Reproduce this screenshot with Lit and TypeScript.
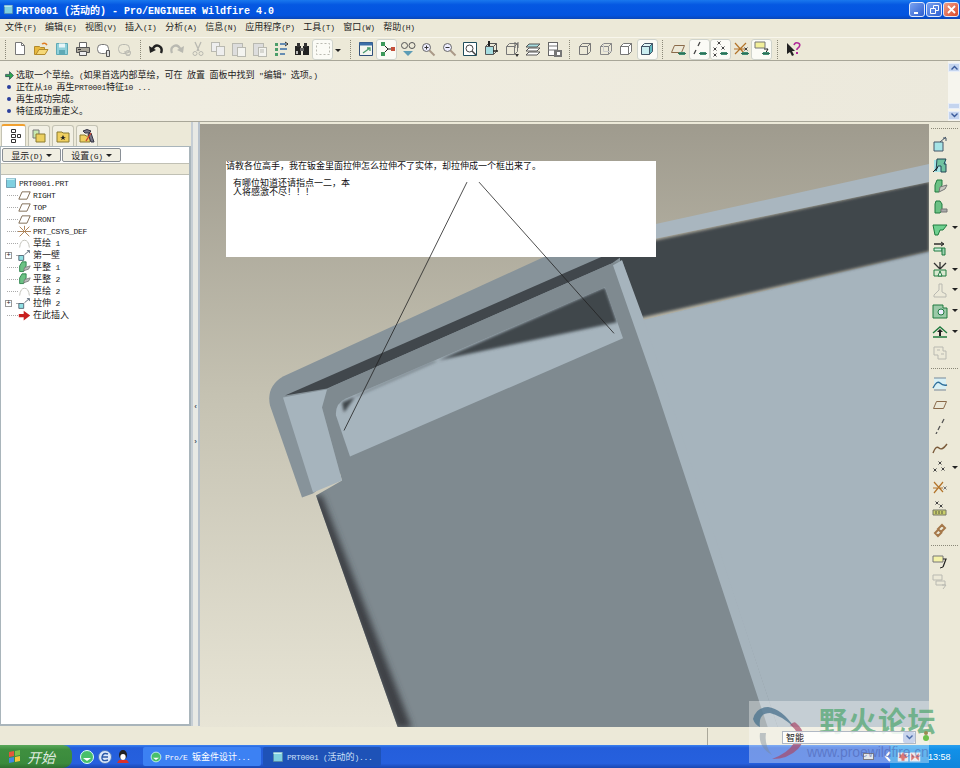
import { LitElement, html, css, svg } from "lit";
import { customElement } from "lit/decorators.js";

// ascii runs get a narrower mono font, like the bitmap font in the shot
const mix = (s: string) =>
  s.split(/([\x20-\x7e]+)/).map((p, i) => (i % 2 ? html`<span class="a">${p}</span>` : p));

const GR = "#1f7a3f";
const GL = "#6cc184";
const BR = "#8a6a4a";
const OFF = "#b9b9b1";

const doc = (x: number, y: number, w: number, h: number, f = "#fff", s = "#777") =>
  svg`<rect x=${x + 0.5} y=${y + 0.5} width=${w} height=${h} fill=${f} stroke=${s} />`;
const ln = (d: string, s = "#555", w = 1) => svg`<path d=${d} fill="none" stroke=${s} stroke-width=${w} />`;
const fl = (d: string, f: string, s = "none") => svg`<path d=${d} fill=${f} stroke=${s} />`;
const cross = (x: number, y: number, s = "#444") => ln(`M${x - 1.5} ${y - 1.5}l3 3m0 -3l-3 3`, s);
const cube = (s = "#888", f = "none") =>
  svg`${fl("M2.5 5.5h8v8h-8z", f, s)}${ln("M2.5 5.5l3-3h8v8l-3 3M10.5 5.5l3-3", s)}`;
const bug = svg`${fl("M9 11h6v3h-6z", "#3f8f73")}${ln("M8 12.5h8", "#2d6f58")}`;
const plane = (s = BR) => fl("M4.5 4.5h10l-3 7h-10z", "none", s);
const mag = (f: string) =>
  svg`<circle cx="6.5" cy="6.5" r="4" fill="#eef" stroke="#666" />${ln("M9.5 9.5l5 5", "#a98", 2)}${ln(f, "#333")}`;

const icons: Record<string, unknown> = {
  new: svg`${fl("M3.5 1.5h6l3 3v9h-9z", "#fff", "#777")}${ln("M9.5 1.5v3h3", "#777")}`,
  open: svg`${fl("M1.5 5.5h5l1 1h4v7h-10z", "#e8b93f", "#b28a2c")}${fl("M3 13.5l3-5h9l-3 5z", "#f5d878", "#b28a2c")}${ln("M9 3q3-2 5 1", "#e07b20", 1.5)}`,
  save: svg`${fl("M2.5 2.5h11v11h-11z", "#8fd0da", "#5fa9b5")}${fl("M5 2.5h6v4H5z", "#e8f6f8")}${fl("M5 9h6v4.5H5z", "#5fa9b5")}`,
  print: svg`${fl("M4.5 1.5h7v5h-7z", "#fff", "#666")}${fl("M1.5 6.5h13v5h-13z", "#aaa69a", "#555")}${fl("M4.5 10.5h7v4h-7z", "#eee", "#555")}${ln("M3 8.5h3", "#333")}`,
  preview: svg`<rect x="1.5" y="3.5" width="11" height="9" rx="4" fill="#fff" stroke="#777" />${fl("M10.5 9.5h3v6h-3z", "#ddd", "#555")}`,
  preview2: svg`<rect x="1.5" y="3.5" width="11" height="9" rx="4" fill="none" stroke=${OFF} />${ln("M7 11h7M9 14h4", OFF)}<circle cx="11" cy="12" r="2.5" fill="none" stroke=${OFF} />`,
  undo: svg`${ln("M4 9Q7 3 11 5T13 12", "#222", 2.4)}${fl("M1 5l1 7 6-3z", "#222")}`,
  redo: svg`${ln("M12 9Q9 3 5 5T3 12", OFF, 2.2)}${fl("M15 5l-1 7-6-3z", OFF)}`,
  cut: svg`${ln("M5 1l4 9M11 1l-4 9", OFF, 1.3)}<circle cx="5" cy="12.5" r="2" fill="none" stroke=${OFF} /><circle cx="11" cy="12.5" r="2" fill="none" stroke=${OFF} />`,
  copy: svg`${doc(1, 1, 8, 9, "#eee", OFF)}${doc(6, 5, 8, 9, "#eee", OFF)}`,
  paste: svg`${doc(1, 2, 10, 12, "#ddd", OFF)}${doc(6, 6, 8, 9, "#f4f4f0", OFF)}`,
  paste2: svg`${doc(1, 2, 10, 12, "#ddd", OFF)}${doc(6, 6, 8, 9, "#f4f4f0", OFF)}${ln("M8 9h4M8 11h4", OFF)}`,
  regen: svg`${fl("M2 2h3v3H2z", "#4c9e6a")}${fl("M2 7h3v3H2z", "#4c9e6a")}${fl("M2 12h3v3H2z", "#4c9e6a")}${ln("M7 3h6M7 8h7M7 13h5", "#3a6ea5", 1.4)}${ln("M12 1l3 2-3 2", "#222")}`,
  find: svg`${fl("M1 5h6v9H1zM9 5h6v9H9z", "#222")}${fl("M3 2h3v4H3zM10 2h3v4h-3z", "#333")}${fl("M6 7h4v3H6z", "#666")}${fl("M2 10h2v3H2z", "#bbb")}`,
  boxsel: svg`<rect x="1.5" y="2.5" width="13" height="11" fill="none" stroke=${OFF} stroke-dasharray="2 2" />`,
  view: svg`${fl("M1.5 1.5h13v13h-13z", "#f4f6f0", "#2f4f7a")}${fl("M1.5 1.5h13v3h-13z", "#3b6ea8")}${ln("M5 12l7-5M9 7h3v3", "#4a9a6c", 1.3)}`,
  net: svg`${ln("M4 3L9 8L4 13M9 8h5", "#222")}${fl("M2 1h4v4H2zM2 11h4v4H2z", "#3d9a5c")}${fl("M12 6h4v4h-4z", "#c5503b")}`,
  spin: svg`<circle cx="4.5" cy="4.5" r="3" fill="none" stroke="#555" /><circle cx="12" cy="4.5" r="3" fill="none" stroke="#555" />${fl("M3 10l5 5 5-5z", "#5c9cb5")}`,
  zin: mag("M4.5 6.5h4M6.5 4.5v4"),
  zout: mag("M4.5 6.5h4"),
  fit: svg`${fl("M1.5 1.5h13v13h-13z", "#fff", "#1f4d5c")}<circle cx="7.5" cy="7.5" r="3.5" fill="none" stroke="#444" />${ln("M10 10l4 4", "#444", 1.4)}`,
  reori: svg`${cube("#555", "#a6dde0")}${fl("M5 0h2v5H5z", "#222")}${ln("M10 10h5", "#222", 1.5)}`,
  saved: svg`${cube("#777")}${ln("M11 1v6M14 1v6", "#666")}${fl("M11 13l4 0-2 3z", "#333")}`,
  layers: svg`${fl("M4 3h11l-3 3H1z", "#a6dde0", "#555")}${fl("M4 7h11l-3 3H1z", "#fff", "#555")}${fl("M4 11h11l-3 3H1z", "#fff", "#555")}`,
  setup: svg`${doc(2, 1, 9, 13, "#fff", "#666")}${ln("M2 5h9M2 9h9", "#777")}${fl("M8 9h8v7H8z", "#777")}${fl("M11 11h3v3h-3z", "#fff")}`,
  wire: cube("#777"),
  hidden: svg`${cube("#888")}${ln("M5.5 2.5v8h8", "#ccc")}`,
  nohid: svg`${fl("M2.5 5.5h8v8h-8z", "#fff", "#777")}${fl("M2.5 5.5l3-3h8l-3 3zM10.5 5.5l3-3v8l-3 3z", "#fff", "#777")}`,
  shade: svg`${fl("M2.5 5.5h8v8h-8z", "#cbeef0", "#456")}${fl("M2.5 5.5l3-3h8l-3 3z", "#e2f7f8", "#456")}${fl("M10.5 5.5l3-3v8l-3 3z", "#5fb8c0", "#456")}`,
  dplane: svg`${plane()}${bug}`,
  daxis: svg`${ln("M9 1L7 5M5 9l-2 4", "#444", 1.3)}${bug}`,
  dpoint: svg`${cross(7, 2)}${cross(3, 8)}${cross(11, 7)}${cross(3, 14)}${bug}`,
  dcsys: svg`${ln("M2 2l9 10M13 2L2 13M1 8h12", "#b3742a", 1.2)}${cross(13, 8)}${bug}`,
  dnote: svg`${fl("M1 1h10v6H1z", "#f2ef9a", "#777")}${ln("M10 8h4l-3 5", "#222")}${bug}`,
  help: svg`${fl("M2 2v11l3-2 2 4 2-1-2-4h3z", "#222")}${ln("M9 4q1-3 4-2t1 4l-2 2v1", "#b22a9a", 1.6)}${fl("M11 11h2v2h-2z", "#b22a9a")}`,
  // right toolbar
  rplane: svg`${fl("M2 6h9v9H2z", "#a6e4e6", "#456")}${ln("M8 6l6-5M11 2h3v3", "#456")}`,
  rsweep: svg`${fl("M2 3h12v12H2z", "#a6e4e6")}${fl("M5 2h9l-2 5h2v8h-5V9H6l-2 5z", "#6fc2a0", "#245")}${ln("M1 15l5-5", "#222")}`,
  rflat: svg`${fl("M5 2h5v5l-3 7H3V7z", GL, GR)}${fl("M8 9l7-2-2 4-6 3z", "#c8c8c0", "#777")}`,
  rflat2: svg`${fl("M4 2h4l2 3v6l-2 3H3V5z", GL, GR)}${fl("M9 10h6v3H9z", "#aaa", "#777")}`,
  rbend: svg`${fl("M1 5h14l-4 5H8l-2 5H3z", "#6fd090", GR)}`,
  rbreak: svg`${ln("M2 4h9", "#222", 1.4)}${ln("M9 2l3 2-3 2", "#222")}${fl("M2 8h8v3H2z", "#cdeee0", GR)}${fl("M10 8h3v7h-3z", "#9bd0b0", GR)}`,
  rcut: svg`${ln("M2 2l6 6M8 1v7M14 2L8 8", "#333", 1.3)}${fl("M2 9h12v6H2z", "#d8e8d0", GR)}${fl("M6 15l2-5 2 5z", "#fff", GR)}`,
  rstamp: svg`${ln("M7 2v6l-5 5v2h12v-3l-4-2V2z", OFF)}`,
  rnotch: svg`${fl("M1 2h10v3h4v10H1z", "#9cc9a8", GR)}<circle cx="9" cy="9" r="3" fill="#eef" stroke=${GR} />`,
  rform: svg`${ln("M1 9L8 3l7 6M1 13h14", GR, 1.4)}${fl("M7 7h2v5H7z", "#222")}${fl("M5 8l3-3 3 3z", "#222")}`,
  rconv: svg`${ln("M2 3h9v4h3v8H6v-4H2z", OFF)}${ln("M5 6h3M9 10h3", OFF)}`,
  sketch: svg`${fl("M2 2h12v11H2z", "#d9f0f4")}${ln("M1 12q4-8 7-5t7 2", "#2f6f9a", 1.4)}${ln("M2 2h12M2 14h12", "#789", 1)}`,
  dplane2: plane(),
  raxis: ln("M12 1L10 5M8 8L6 12M5 14l-1 2", "#555", 1.3),
  rcurve: ln("M1 14q3-8 6-5t8-4", "#7a5a3a", 1.4),
  rpoint: svg`${cross(8, 4)}${cross(3, 11)}${cross(11, 10)}`,
  rcsys: svg`${ln("M2 2l9 10M11 2L2 13M1 8h10", "#b3742a", 1.2)}${cross(13, 8, "#777")}`,
  ranal: svg`${cross(5, 2)}${cross(9, 5)}${fl("M1 9h13v5H1z", "#c9cf6a", "#776")}${ln("M4 10v3M7 10v3M10 10v3", "#554")}`,
  rchain: svg`${ln("M10 3l3 3-4 4-3-3zM7 7l-4 4 3 3 4-4", "#a5784a", 2)}`,
  rnote: svg`${fl("M1 2h10v6H1z", "#f4f2a8", "#777")}${ln("M11 5h3l-3 8", "#222", 1.2)}${ln("M8 14l3-1", "#222")}`,
  rnote2: svg`${ln("M1 1h9v5H1zM4 7h9v4H4z", OFF)}${ln("M10 11h4l-3 4", OFF)}`,
  // tree
  tplane: fl("M5 3.5h10l-4 9H1z", "none", "#6a5238"),
  tcsys: ln("M2 2l12 12M14 2L2 14M0 8h16M8 1v5", "#a5784a", 1.1),
  tsketch: ln("M2 13q1-9 6-9t6 9", "#c4c4bc", 1.2),
  twall: svg`${fl("M1 8h6v6H1z", "#8fe0e4", "#456")}${ln("M8 7l6-5M11 2h3v3", "#456")}`,
  tflat: svg`${fl("M5 1h5v5l-3 7H2V6z", GL, GR)}${fl("M8 8l7-2-2 4-6 2z", "#bbb", "#777")}`,
  tins: fl("M1 6h6V2l8 6-8 6v-4H1z", "#c8201f"),
  // taskbar
  flag: svg`${fl("M2 3l5-1v5l-5 1z", "#e8563a")}${fl("M8 2l5-1v5l-5 1z", "#7fc24a")}${fl("M2 9l5-1v5l-5 1z", "#3f88e0")}${fl("M8 8l5-1v5l-5 1z", "#f4c63a")}`,
  ie: svg`<circle cx="8" cy="8" r="6.5" fill="#49c06a" stroke="#dff" /><path d="M4 9h8l-4 3z" fill="#fff" />`,
  browser: svg`<circle cx="8" cy="8" r="6.5" fill="#dce8f8" stroke="#4a78c0" />${ln("M5 8h6M11 5q-5-2-6 3t6 3", "#2a5aa8", 1.4)}`,
  qq: svg`<ellipse cx="8" cy="6" rx="4" ry="5" fill="#222" /><ellipse cx="8" cy="8" rx="2.7" ry="3" fill="#fff" />${fl("M4 11h8l2 3H2z", "#d8302a")}`,
  part: svg`${fl("M2 2h12v12H2z", "#7fd0e0", "#5a8aa0")}${fl("M2 2h12l-2 2H2z", "#c6f0f4")}`,
  leaf: svg`${fl("M1 2h14v12H1z", "#d8dfe8")}${fl("M8 2l2 3 3-1-1 3 2 2-4 1v3H6v-3l-4-1 2-2-1-3 3 1z", "#c8302a")}`,
  tflag: svg`${fl("M1 2h14v12H1z", "#e4e4ea")}${fl("M3 3l5 5 5-5v10l-5-5-5 5z", "#c8302a")}`,
};

const ic = (name: string) => html`<svg class="ic" viewBox="0 0 16 16">${icons[name]}</svg>`;

type Tool = string | { n: string; on?: boolean; drop?: boolean };
const topTools: Tool[][] = [
  ["new", "open", "save", "print", "preview", "preview2"],
  ["undo", "redo", "cut", "copy", "paste", "paste2", "regen", "find", { n: "boxsel", on: true, drop: true }],
  ["view", { n: "net", on: true }, "spin", "zin", "zout", "fit", "reori", "saved", "layers", "setup"],
  ["wire", "hidden", "nohid", { n: "shade", on: true }],
  ["dplane", { n: "daxis", on: true }, { n: "dpoint", on: true }, "dcsys", { n: "dnote", on: true }],
  ["help"],
];

const sideTools: { n: string; drop?: boolean }[][] = [
  [
    { n: "rplane" }, { n: "rsweep" }, { n: "rflat" }, { n: "rflat2" }, { n: "rbend", drop: true },
    { n: "rbreak" }, { n: "rcut", drop: true }, { n: "rstamp", drop: true }, { n: "rnotch", drop: true },
    { n: "rform", drop: true }, { n: "rconv" },
  ],
  [
    { n: "sketch" }, { n: "dplane2" }, { n: "raxis" }, { n: "rcurve" }, { n: "rpoint", drop: true },
    { n: "rcsys" }, { n: "ranal" }, { n: "rchain" },
  ],
  [{ n: "rnote" }, { n: "rnote2" }],
];

const menus = ["文件(F)", "编辑(E)", "视图(V)", "插入(I)", "分析(A)", "信息(N)", "应用程序(P)", "工具(T)", "窗口(W)", "帮助(H)"];

const tree: { t: string; i: string; exp?: boolean; root?: boolean }[] = [
  { t: "PRT0001.PRT", i: "part", root: true },
  { t: "RIGHT", i: "tplane" },
  { t: "TOP", i: "tplane" },
  { t: "FRONT", i: "tplane" },
  { t: "PRT_CSYS_DEF", i: "tcsys" },
  { t: "草绘 1", i: "tsketch" },
  { t: "第一壁", i: "twall", exp: true },
  { t: "平整 1", i: "tflat" },
  { t: "平整 2", i: "tflat" },
  { t: "草绘 2", i: "tsketch" },
  { t: "拉伸 2", i: "twall", exp: true },
  { t: "在此插入", i: "tins" },
];

@customElement("app-root")
export class AppRoot extends LitElement {
  static styles = css`
    :host {
      display: block;
      width: 960px;
      height: 768px;
    }
    .app {
      position: relative;
      width: 960px;
      height: 768px;
      overflow: hidden;
      display: flex;
      flex-direction: column;
      background: #ece9d8;
      color: #222;
      font-family: "Noto Sans CJK SC", "Liberation Sans", sans-serif;
      font-size: 9px;
    }
    .a {
      font-family: "Liberation Mono", monospace;
      font-size: 8px;
      letter-spacing: -0.3px;
      white-space: pre;
    }
    .ic {
      width: 16px;
      height: 16px;
      display: block;
      flex: none;
    }

    .title {
      height: 19px;
      flex: none;
      display: flex;
      align-items: center;
      padding: 0 1px 0 3px;
      gap: 1px;
      background: linear-gradient(#1a78ee, #0558e2 25%, #0354e0 80%, #0a46b8);
      color: #fff;
      font: bold 10px "Liberation Mono", "Noto Sans CJK SC", monospace;
      white-space: pre;
    }
    .title .ic {
      width: 11px;
      height: 11px;
      margin-right: 1px;
    }
    .title .txt {
      flex: 1;
    }
    .wbtn {
      width: 16px;
      height: 15px;
      border: 1px solid #dfe8fa;
      border-radius: 3px;
      box-sizing: border-box;
      background: linear-gradient(135deg, #7aa2f0, #2c5ed0);
      display: flex;
      align-items: center;
      justify-content: center;
    }
    .wbtn.x {
      background: linear-gradient(135deg, #f0a088, #d8482a);
    }
    .wbtn svg {
      width: 9px;
      height: 9px;
    }

    .menu {
      height: 18px;
      flex: none;
      display: flex;
      align-items: center;
      gap: 8.5px;
      padding: 0 0 3px 5px;
      box-sizing: border-box;
      background: #ece9d8;
      white-space: pre;
    }
    .toolbar {
      height: 24px;
      flex: none;
      display: flex;
      align-items: center;
      padding-left: 2px;
      background: #ece9d8;
      border-top: 1px solid #f8f6ec;
      border-bottom: 1px solid #a8a698;
      box-sizing: border-box;
    }
    .tool {
      width: 20.9px;
      height: 21px;
      flex: none;
      display: flex;
      align-items: center;
      justify-content: center;
      box-sizing: border-box;
      position: relative;
    }
    .tool.on {
      background: #fbfbf6;
      border: 1px solid #cfd3cc;
      border-radius: 3px;
    }
    .tool.wide {
      margin-right: 12px;
    }
    .arrow {
      width: 0;
      height: 0;
      border: 3px solid transparent;
      border-top: 3px solid #222;
      border-bottom: 0;
    }
    .tool .arrow {
      position: absolute;
      right: -9px;
      top: 9px;
    }
    .sep {
      width: 0;
      height: 19px;
      margin: 0 4.5px;
      border-left: 1px dotted #8a8878;
      flex: none;
    }
    .toolbar .sep:first-child {
      margin: 0 4px 0 3px;
    }

    .msg {
      height: 61px;
      flex: none;
      display: flex;
      background: linear-gradient(90deg, #f1eee2, #ece9dc);
      border-bottom: 1px solid #a8a698;
      box-sizing: border-box;
    }
    .msg .lines {
      flex: 1;
      padding: 8px 0 0 5px;
    }
    .mline {
      height: 12px;
      line-height: 12px;
      display: flex;
      align-items: center;
      gap: 2px;
      white-space: pre;
    }
    .mline .ic {
      width: 9px;
      height: 9px;
    }
    .dot {
      width: 4px;
      height: 4px;
      margin: 0 3px 0 2px;
      border-radius: 50%;
      background: #2b3f9c;
      flex: none;
    }
    .scroll {
      width: 12px;
      display: flex;
      flex-direction: column;
      background: #f6f5ee;
      padding: 2px 0 1px;
      box-sizing: border-box;
    }
    .scroll b {
      height: 9px;
      background: #c4d4ee;
      border: 1px solid #e8eef8;
      box-sizing: border-box;
      display: flex;
      align-items: center;
      justify-content: center;
    }
    .scroll b.small {
      height: 6px;
      margin-bottom: 2px;
    }
    .scroll svg {
      width: 7px;
      height: 5px;
    }
    .scroll i {
      flex: 1;
    }

    .main {
      flex: 1;
      min-height: 0;
      display: flex;
    }
    .left {
      width: 191px;
      flex: none;
      display: flex;
      flex-direction: column;
      padding-top: 2px;
    }
    .tabs {
      height: 22px;
      display: flex;
      gap: 2px;
      padding-left: 1px;
      align-items: flex-end;
    }
    .tab {
      width: 22px;
      height: 21px;
      background: #f2f0e4;
      border: 1px solid #c4c3b4;
      border-bottom: 0;
      border-radius: 3px 3px 0 0;
      box-sizing: border-box;
      display: flex;
      align-items: center;
      justify-content: center;
    }
    .tab.on {
      width: 25px;
      height: 22px;
      background: #fff;
      border-top: 2px solid #f0a030;
    }
    .tree-panel {
      flex: 1;
      margin-bottom: 2px;
      background: #fff;
      border: 1px solid #a9b5bb;
      border-width: 1px 2px 2px 1px;
      display: flex;
      flex-direction: column;
    }
    .btns {
      display: flex;
      height: 15px;
      gap: 1px;
      padding: 1px 0 0 1px;
      box-sizing: border-box;
    }
    .btn {
      width: 59px;
      height: 14px;
      display: flex;
      align-items: center;
      justify-content: center;
      gap: 3px;
      background: #f0eee2;
      border: 1px solid #8a9096;
      border-radius: 2px;
      box-sizing: border-box;
      white-space: pre;
    }
    .band {
      height: 12px;
      margin-top: 1px;
      background: #ece9d8;
      border: 1px solid #c0c0b4;
      border-width: 1px 0;
      box-sizing: border-box;
      flex: none;
    }
    .rows {
      padding: 2px 0 0 4px;
    }
    .row {
      height: 12px;
      display: flex;
      align-items: center;
      white-space: pre;
      line-height: 12px;
    }
    .row .exp {
      width: 7px;
      height: 7px;
      border: 1px solid #999;
      box-sizing: border-box;
      background: #fff;
      margin-right: 2px;
      flex: none;
      display: flex;
      align-items: center;
      justify-content: center;
      font: 7px/5px "Liberation Mono", monospace;
    }
    .row .lead {
      width: 11px;
      flex: none;
      border-bottom: 1px dotted #aaa;
      margin: 0 -2px 0 2px;
      height: 0;
    }
    .row .lead.short {
      width: 2px;
    }
    .row .ic {
      width: 13px;
      height: 13px;
      margin: 0 2px;
    }
    .row.root .ic {
      width: 12px;
      height: 12px;
      margin: 0 2px 0 0;
    }
    .sash {
      width: 9px;
      flex: none;
      display: flex;
      flex-direction: column;
      align-items: center;
      justify-content: center;
      gap: 26px;
      box-sizing: border-box;
      border-left: 2px solid #c6ced4;
      border-right: 2px solid #b8c2cc;
      margin-bottom: 2px;
      color: #456;
      font: bold 8px "Liberation Sans", sans-serif;
      background: #e8e9e4;
    }
    .canvas {
      flex: 1;
      position: relative;
      overflow: hidden;
      margin-top: 2px;
      margin-bottom: 1px;
    }
    .canvas > svg {
      display: block;
      width: 100%;
      height: 100%;
    }
    .note {
      position: absolute;
      left: 26px;
      top: 37px;
      width: 430px;
      height: 96px;
      background: #fff;
      color: #111;
      line-height: 9px;
    }
    .note p {
      margin: 0;
      white-space: pre-wrap;
    }
    .note .body {
      width: 124px;
      padding: 8px 0 0 7px;
    }
    .lines-over {
      position: absolute;
      inset: 0;
      pointer-events: none;
    }
    .side {
      width: 31px;
      flex: none;
      background: #ece9d8;
      display: flex;
      flex-direction: column;
      padding-top: 2px;
      box-sizing: border-box;
    }
    .side .dots {
      height: 5px;
      margin: 0 2px;
      border-bottom: 1px dotted #8a8878;
      box-sizing: border-box;
      flex: none;
    }
    .side .slot {
      height: 20.8px;
      flex: none;
      display: flex;
      align-items: center;
      padding-left: 3px;
      gap: 4px;
    }
    .side .group {
      padding: 5px 0 1px;
    }

    .status {
      height: 17px;
      flex: none;
      background: #ece9d8;
      display: flex;
    }
    .status i {
      width: 707px;
      border-right: 1px solid #aaa89a;
      flex: none;
    }

    .taskbar {
      height: 23px;
      flex: none;
      display: flex;
      align-items: center;
      background: linear-gradient(#3a82f0 0, #245edb 12%, #2660de 80%, #1a46b0);
      color: #fff;
    }
    .start {
      width: 72px;
      height: 23px;
      flex: none;
      display: flex;
      align-items: center;
      gap: 4px;
      padding-left: 7px;
      box-sizing: border-box;
      border-radius: 0 9px 9px 0;
      background: linear-gradient(#5aa85a, #3f8f3f 20%, #3a8a3c 80%, #2f6f30);
      font: italic 14px "Noto Sans CJK SC", sans-serif;
      color: rgba(255, 255, 255, 0.85);
    }
    .quick {
      display: flex;
      gap: 2px;
      padding-left: 7px;
      width: 71px;
      flex: none;
      box-sizing: border-box;
    }
    .task {
      width: 118px;
      height: 19px;
      flex: none;
      margin-right: 2px;
      display: flex;
      align-items: center;
      gap: 3px;
      padding-left: 7px;
      box-sizing: border-box;
      border-radius: 2px;
      background: #3c81f3;
      white-space: pre;
    }
    .task.cur {
      background: #1e52b7;
      padding-left: 9px;
      color: #cfe0f8;
    }
    .task .ic {
      width: 12px;
      height: 12px;
    }
    .grow {
      flex: 1;
    }
    .kbd {
      width: 11px;
      height: 7px;
      margin-right: 10px;
      background: #d8dce0;
      border: 1px solid #334;
      box-sizing: border-box;
      flex: none;
    }
    .chev {
      width: 8px;
      height: 11px;
      margin-right: -2px;
      flex: none;
      position: relative;
    }
    .tray {
      width: 70px;
      height: 23px;
      flex: none;
      display: flex;
      align-items: center;
      padding-left: 7px;
      box-sizing: border-box;
      background: linear-gradient(#2aa0ee, #1290e8 20%, #0f86dc);
      font: 9px "Liberation Sans", sans-serif;
      white-space: pre;
    }
    .tray .ic {
      width: 12px;
      height: 12px;
    }
    .tray span {
      margin-left: 7px;
    }

    .mark {
      position: absolute;
      left: 749px;
      top: 701px;
      width: 180px;
      height: 62px;
      background: rgba(255, 255, 255, 0.35);
    }
    .mark .logo {
      position: absolute;
      left: 1px;
      top: 2px;
      width: 62px;
      height: 58px;
    }
    .mark .cn {
      position: absolute;
      left: 70px;
      top: 1px;
      font: bold 28px/36px "Noto Sans CJK SC", sans-serif;
      letter-spacing: 1.5px;
      color: rgba(90, 170, 120, 0.8);
      white-space: nowrap;
    }
    .mark .en {
      position: absolute;
      left: 58px;
      top: 42px;
      font: 14px/18px "Liberation Sans", sans-serif;
      letter-spacing: -0.1px;
      color: rgba(70, 90, 170, 0.5);
      white-space: nowrap;
    }
    .combo {
      position: absolute;
      left: 33px;
      top: 30px;
      width: 134px;
      height: 13px;
      background: rgba(255, 255, 255, 0.85);
      border: 1px solid #b0b8c4;
      box-sizing: border-box;
      display: flex;
      align-items: center;
      padding-left: 3px;
      color: #222;
    }
    .combo span {
      flex: 1;
    }
    .combo b {
      width: 12px;
      height: 11px;
      background: #c8d4ec;
      border-radius: 2px;
      display: flex;
      align-items: center;
      justify-content: center;
    }
    .combo svg {
      width: 7px;
      height: 5px;
    }
    .lamp {
      position: absolute;
      left: 174px;
      top: 34px;
      width: 6px;
      height: 6px;
      border-radius: 50%;
      background: #6cc04a;
      box-shadow: 0 -5px 0 -1px #998a50;
    }
  `;

  private renderTop() {
    return html`<div class="toolbar">
      ${topTools.map(
        (g) => html`<span class="sep"></span>
          ${g.map((t) => {
            const o = typeof t === "string" ? { n: t } : t;
            return html`<div class="tool ${o.on ? "on" : ""} ${o.drop ? "wide" : ""}">
              ${ic(o.n)}${o.drop ? html`<span class="arrow"></span>` : ""}
            </div>`;
          })}`
      )}
    </div>`;
  }

  private renderModel() {
    return svg`<svg viewBox="200 124 729 602" preserveAspectRatio="none">
      <defs>
        <linearGradient id="bg" x1="0" y1="0" x2="0" y2="1">
          <stop offset="0" stop-color="#9f9b8e" />
          <stop offset="0.45" stop-color="#c5c2b2" />
          <stop offset="1" stop-color="#e8e5d6" />
        </linearGradient>
        <filter id="b3"><feGaussianBlur stdDeviation="3" /></filter>
        <filter id="b1"><feGaussianBlur stdDeviation="1.6" /></filter>
        <clipPath id="pocket"><path d="M350 456L336 415Q335 403 346 398L605 287L623 338Z" /></clipPath>
        <clipPath id="body"><path d="M342 480L322 407Q319 394 332 386L612 263L622 260L778 727L398 727L316 495Z" /></clipPath>
      </defs>
      <rect x="200" y="124" width="729" height="603" fill="url(#bg)" />
      <path d="M600 330L929 251V727H770Z" fill="#a6b4bd" />
      <path d="M600 252L929 182V251L643 317L600 330Z" fill="#41474c" filter="url(#b1)" />
      <path d="M600 236L929 164V182L600 250Z" fill="#a9b6bf" />
      <path d="M302 497L270 405Q266 386 283 376L620 222V262L313 493Z" fill="#87939a" />
      <path d="M285 395L603 256L622 256L612 263L327 388Z" fill="#41474c" />
      <path d="M342 480L322 407Q319 394 332 386L612 263L622 260L778 727L398 727L316 495Z" fill="#7f8a90" />
      <path d="M312 495L322 495L412 727L396 727Z" fill="#3c4045" filter="url(#b3)" clip-path="url(#body)" />
      <path d="M283 397L327 389L322 407L342 480L313 492Z" fill="#a6b4bd" />
      <path d="M613 265L622 260L643 317L778 727L768 727L655 385Z" fill="#a6b4bd" />
      <path d="M350 456L336 415Q335 403 346 398L605 287L623 338Z" fill="#a6b4bd" />
      <g clip-path="url(#pocket)">
        <path d="M342 402L605 287L617 322L433 361L356 395L344 412Z" fill="#41474c" filter="url(#b1)" />
      </g>
    </svg>`;
  }

  render() {
    return html`<div class="app">
      <div class="title">
        ${ic("part")}
        <span class="txt">PRT0001 (活动的) - Pro/ENGINEER Wildfire 4.0</span>
        <span class="wbtn"><svg viewBox="0 0 9 9"><path d="M1 7h4v2H1z" fill="#fff" /></svg></span>
        <span class="wbtn"><svg viewBox="0 0 9 9"><path d="M.5 3.5h5v5h-5zM3.5 3V.5h5v5H6" fill="none" stroke="#fff" /></svg></span>
        <span class="wbtn x"><svg viewBox="0 0 9 9"><path d="M1 1l7 7M8 1L1 8" stroke="#fff" stroke-width="1.8" /></svg></span>
      </div>
      <div class="menu">${menus.map((m) => html`<span>${mix(m)}</span>`)}</div>
      ${this.renderTop()}
      <div class="msg">
        <div class="lines">
          <div class="mline">
            <svg class="ic" viewBox="0 0 16 16"><path d="M1 6h7V1l7 7-7 7v-5H1z" fill="#2fa84f" stroke="#124" /></svg>
            <span>${mix('选取一个草绘。(如果首选内部草绘，可在 放置 面板中找到 "编辑" 选项。)')}</span>
          </div>
          <div class="mline"><i class="dot"></i><span>${mix("正在从10 再生PRT0001特征10 ...")}</span></div>
          <div class="mline"><i class="dot"></i><span>再生成功完成。</span></div>
          <div class="mline"><i class="dot"></i><span>特征成功重定义。</span></div>
        </div>
        <div class="scroll">
          <b><svg viewBox="0 0 7 5"><path d="M.5 4.500l3-3 3 3" fill="none" stroke="#3a5a9a" stroke-width="1.4" /></svg></b>
          <i></i>
          <b class="small"></b>
          <b><svg viewBox="0 0 7 5"><path d="M.5 .5l3 3 3-3" fill="none" stroke="#3a5a9a" stroke-width="1.4" /></svg></b>
        </div>
      </div>
      <div class="main">
        <div class="left">
          <div class="tabs">
            <div class="tab on">
              <svg class="ic" viewBox="0 0 16 16"><path d="M5.500 1.500h4v3h-4zM5.500 6.500h4v3h-4zM5.500 11.500h4v3h-4zM11.500 6.500h3v3h-3z" fill="#fff" stroke="#333" /></svg>
            </div>
            <div class="tab">
              <svg class="ic" viewBox="0 0 16 16"><path d="M2 2h6v8H2z" fill="#c8e8b0" stroke="#777" /><path d="M5 6h9v8H5z" fill="#eccf5f" stroke="#8a7a30" /></svg>
            </div>
            <div class="tab">
              <svg class="ic" viewBox="0 0 16 16"><path d="M2 4h5l1 1h6v9H2z" fill="#f0d060" stroke="#8a7a30" /><path d="M8 7l1 2h2l-2 1 1 2-2-1-2 1 1-2-2-1h2z" fill="#222" /></svg>
            </div>
            <div class="tab">
              <svg class="ic" viewBox="0 0 16 16"><path d="M1 7h5l1 1h4v6H1z" fill="#f0d060" stroke="#8a7a30" /><path d="M4 3q4-3 8 0l-2 2H6zM12 5l3 9h-3L9 6z" fill="#778" stroke="#334" /><path d="M7 13l5-8" stroke="#c43" stroke-width="1.4" /></svg>
            </div>
          </div>
          <div class="tree-panel">
            <div class="btns">
              <div class="btn"><span>${mix("显示(D)")}</span><span class="arrow"></span></div>
              <div class="btn"><span>${mix("设置(G)")}</span><span class="arrow"></span></div>
            </div>
            <div class="band"></div>
            <div class="rows">
              ${tree.map(
                (r) => html`<div class="row ${r.root ? "root" : ""}">
                  ${r.root ? "" : r.exp ? html`<span class="exp">+</span><span class="lead short"></span>` : html`<span class="lead"></span>`}
                  ${ic(r.i)}<span>${mix(r.t)}</span>
                </div>`
              )}
            </div>
          </div>
        </div>
        <div class="sash"><span>‹</span><span>›</span></div>
        <div class="canvas">
          ${this.renderModel()}
          <div class="note">
            <p>请教各位高手，我在钣金里面拉伸怎么拉伸不了实体，却拉伸成一个框出来了。</p>
            <p class="body">有哪位知道还请指点一二，本人将感激不尽！！！</p>
          </div>
          <svg class="lines-over" viewBox="200 124 729 602" preserveAspectRatio="none">
            <path d="M467 182L344 430M479 182L614 333" stroke="#222" stroke-width="0.8" fill="none" />
          </svg>
        </div>
        <div class="side">
          ${sideTools.map(
            (g) => html`<div class="dots"></div>
              <div class="group">
                ${g.map(
                  (t) => html`<div class="slot">${ic(t.n)}${t.drop ? html`<span class="arrow"></span>` : ""}</div>`
                )}
              </div>`
          )}
        </div>
      </div>
      <div class="status"><i></i></div>
      <div class="taskbar">
        <div class="start">${ic("flag")}<span>开始</span></div>
        <div class="quick">${ic("ie")}${ic("browser")}${ic("qq")}</div>
        <div class="task">${ic("ie")}<span>${mix("Pro/E 钣金件设计...")}</span></div>
        <div class="task cur">${ic("part")}<span>${mix("PRT0001 (活动的)...")}</span></div>
        <div class="grow"></div>
        <div class="kbd"></div>
        <svg class="chev" viewBox="0 0 8 11"><path d="M6 1L2 5.500l4 4.500" fill="none" stroke="#fff" stroke-width="2" /></svg>
        <div class="tray">${ic("leaf")}${ic("tflag")}<span>13:58</span></div>
      </div>
      <div class="mark">
        <svg class="logo" viewBox="0 0 62 58">
          <path d="M3 16Q6 4 18 4Q32 6 44 24Q30 12 20 10Q8 10 10 24Q5 22 3 16Z" fill="#4f7590" opacity="0.8" />
          <path d="M46 20Q60 32 48 46Q38 56 22 56Q38 50 44 40Q52 30 40 22Q44 18 46 20Z" fill="#a8486a" opacity="0.7" />
          <path d="M10 30Q8 44 22 52Q14 42 16 30Z" fill="#7a8a98" opacity="0.45" />
        </svg>
        <div class="cn">野火论坛</div>
        <div class="en">www.proewildfire.cn</div>
        <div class="combo"><span>智能</span><b><svg viewBox="0 0 7 5"><path d="M.5 .5l3 3 3-3" fill="none" stroke="#4a6aa8" stroke-width="1.4" /></svg></b></div>
        <div class="lamp"></div>
      </div>
    </div>`;
  }
}
